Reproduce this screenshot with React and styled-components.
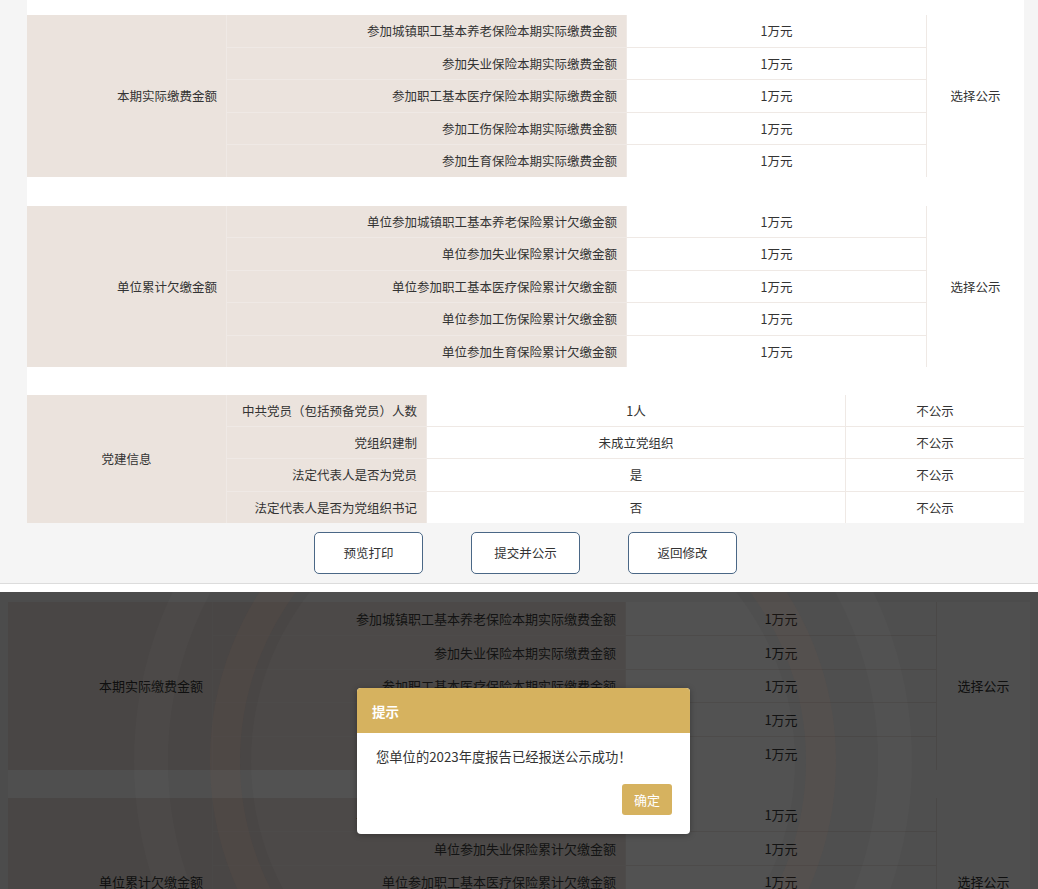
import React from "react";
import styled, { createGlobalStyle } from "styled-components";

const beige = "#ebe3dd";
const gold = "#d6b25f";

const GlobalStyle = createGlobalStyle`
  html, body {
    margin: 0;
    padding: 0;
    overflow: hidden;
    background: #ffffff;
  }
  body {
    font-family: "Noto Sans CJK SC", "Noto Sans", sans-serif;
    color: #333;
  }
`;

const Screen = styled.section`
  position: relative;
  box-sizing: border-box;
  height: ${(p) => p.$h}px;
  padding: ${(p) => p.$pad};
  margin-top: ${(p) => p.$top || 0}px;
  background: #f5f5f5;
  border-bottom: ${(p) => (p.$line ? "1px solid #dcdcdc" : "none")};
  overflow: hidden;
  font-size: ${(p) => p.$fs}px;
`;

const Sheet = styled.div`
  background: #ffffff;
  padding-top: ${(p) => p.$pt || 0}px;
  width: ${(p) => p.$w}px;
`;

const Grid = styled.div`
  display: grid;
  grid-template-columns: ${(p) => p.$cols};
  grid-auto-rows: ${(p) => p.$row}px;
  gap: 1px;
  background: #efe9e5;
`;

const Cell = styled.div`
  display: flex;
  align-items: center;
  justify-content: ${(p) =>
    p.$align === "right" ? "flex-end" : "center"};
  padding: 0 9px;
  background: ${(p) => (p.$label ? beige : "#ffffff")};
  grid-row: ${(p) => (p.$span ? `span ${p.$span}` : "auto")};
  white-space: nowrap;
`;

const Blank = styled.div`
  height: ${(p) => p.$h}px;
`;

const ButtonBar = styled.div`
  display: flex;
  justify-content: center;
  gap: 48px;
  padding-top: 9px;
  width: 997px;
`;

const Button = styled.button`
  width: 109px;
  height: 42px;
  border: 1px solid #4a6786;
  border-radius: 5px;
  background: #ffffff;
  color: #333;
  font-family: inherit;
  font-size: 12.5px;
  cursor: pointer;
`;

const Mask = styled.div`
  position: absolute;
  inset: 0;
  background: rgba(0, 0, 0, 0.69);
`;

const Watermark = styled.svg`
  position: absolute;
  left: 0;
  top: 0;
  pointer-events: none;
`;

const Dialog = styled.div`
  position: absolute;
  left: 357px;
  top: 96px;
  width: 333px;
  height: 146px;
  display: flex;
  flex-direction: column;
  background: #ffffff;
  border-radius: 4px;
  overflow: hidden;
  box-shadow: 0 1px 6px rgba(0, 0, 0, 0.3);
`;

const DialogHead = styled.div`
  height: 45px;
  display: flex;
  align-items: center;
  padding-left: 15px;
  background: ${gold};
  color: #ffffff;
  font-size: 13.5px;
  font-weight: 700;
`;

const DialogBody = styled.div`
  flex: 1;
  display: flex;
  flex-direction: column;
  padding: 14px 18px 19px 19px;
`;

const Message = styled.p`
  margin: 0;
  line-height: 20px;
  font-size: 13.3px;
  color: #333;
`;

const Confirm = styled.button`
  margin-top: auto;
  align-self: flex-end;
  width: 50px;
  height: 31px;
  border: none;
  border-radius: 3px;
  background: ${gold};
  color: #ffffff;
  font-family: inherit;
  font-size: 13px;
`;

const payRows = [
  "参加城镇职工基本养老保险本期实际缴费金额",
  "参加失业保险本期实际缴费金额",
  "参加职工基本医疗保险本期实际缴费金额",
  "参加工伤保险本期实际缴费金额",
  "参加生育保险本期实际缴费金额",
].map((k) => [k, "1万元"]);

const owedRows = [
  "单位参加城镇职工基本养老保险累计欠缴金额",
  "单位参加失业保险累计欠缴金额",
  "单位参加职工基本医疗保险累计欠缴金额",
  "单位参加工伤保险累计欠缴金额",
  "单位参加生育保险累计欠缴金额",
].map((k) => [k, "1万元"]);

const partyRows = [
  ["中共党员（包括预备党员）人数", "1人", "不公示"],
  ["党组织建制", "未成立党组织", "不公示"],
  ["法定代表人是否为党员", "是", "不公示"],
  ["法定代表人是否为党组织书记", "否", "不公示"],
];

const Table = ({ group, groupAlign, rows, cols, rowH, note }) => (
  <Grid $cols={cols} $row={rowH}>
    <Cell $label $span={rows.length} $align={groupAlign}>
      {group}
    </Cell>
    {rows.map(([k, v, n], i) => (
      <React.Fragment key={k}>
        <Cell $label $align="right">
          {k}
        </Cell>
        <Cell>{v}</Cell>
        {note ? (
          i === 0 && <Cell $span={rows.length}>{note}</Cell>
        ) : (
          <Cell>{n}</Cell>
        )}
      </React.Fragment>
    ))}
  </Grid>
);

// faint emblem rings behind the dialog
const Rings = () => {
  const cx = 523;
  const cy = 169;
  return (
    <Watermark width="1038" height="297" viewBox="0 0 1038 297">
      <circle cx={cx} cy={cy} r="272" fill="rgba(255,255,255,0.018)" />
      <circle
        cx={cx}
        cy={cy}
        r="298"
        fill="none"
        stroke="rgba(150,95,70,0.07)"
        strokeWidth="30"
      />
      <circle
        cx={cx}
        cy={cy}
        r="372"
        fill="none"
        stroke="rgba(255,255,255,0.018)"
        strokeWidth="34"
      />
    </Watermark>
  );
};

export default function App() {
  const topCols = "199px 399px 299px 1fr";
  const dimCols = "204px 412px 310px 93px";
  return (
    <>
      <GlobalStyle />
      <Screen $h={584} $pad="0 14px 0 27px" $line $fs={12.5}>
        <Sheet $pt={15} $w={997}>
          <Table
            group="本期实际缴费金额"
            groupAlign="right"
            rows={payRows}
            cols={topCols}
            rowH={31.5}
            note="选择公示"
          />
          <Blank $h={29} />
          <Table
            group="单位累计欠缴金额"
            groupAlign="right"
            rows={owedRows}
            cols={topCols}
            rowH={31.5}
            note="选择公示"
          />
          <Blank $h={28} />
          <Table
            group="党建信息"
            groupAlign="center"
            rows={partyRows}
            cols="199px 199px 418px 1fr"
            rowH={31.2}
          />
        </Sheet>
        <ButtonBar>
          <Button>预览打印</Button>
          <Button>提交并公示</Button>
          <Button>返回修改</Button>
        </ButtonBar>
      </Screen>

      <Screen $h={297} $pad="10px 0 0 8px" $top={8} $fs={13}>
        <Sheet $w={1022}>
          <Table
            group="本期实际缴费金额"
            groupAlign="right"
            rows={payRows}
            cols={dimCols}
            rowH={32.8}
            note="选择公示"
          />
          <Blank $h={28} />
          <Table
            group="单位累计欠缴金额"
            groupAlign="right"
            rows={owedRows}
            cols={dimCols}
            rowH={32.8}
            note="选择公示"
          />
        </Sheet>
        <Mask />
        <Rings />
        <Dialog>
          <DialogHead>提示</DialogHead>
          <DialogBody>
            <Message>您单位的2023年度报告已经报送公示成功！</Message>
            <Confirm>确定</Confirm>
          </DialogBody>
        </Dialog>
      </Screen>
    </>
  );
}
